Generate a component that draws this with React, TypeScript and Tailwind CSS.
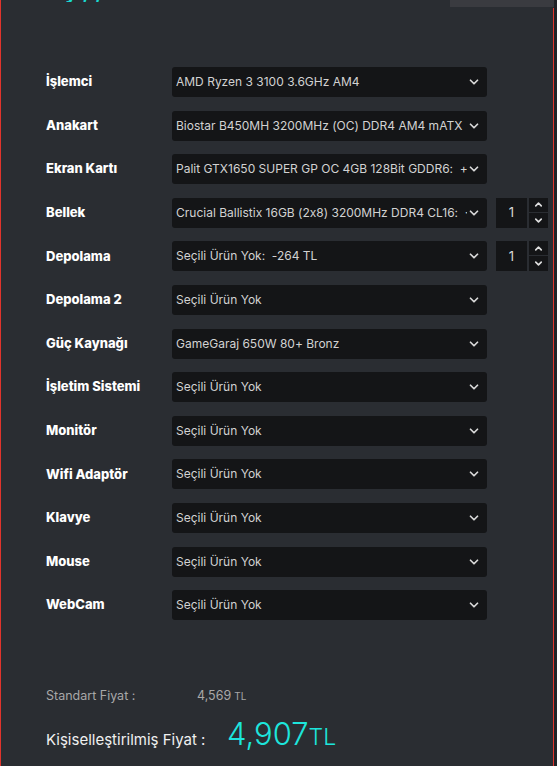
import { ChevronDown, ChevronUp } from "lucide-react";

interface Part {
  label: string;
  value: string;
  qty?: boolean;
}

const parts: Part[] = [
  { label: "İşlemci", value: "AMD Ryzen 3 3100 3.6GHz AM4" },
  { label: "Anakart", value: "Biostar B450MH 3200MHz (OC) DDR4 AM4 mATX" },
  { label: "Ekran Kartı", value: "Palit GTX1650 SUPER GP OC 4GB 128Bit GDDR6:  +" },
  { label: "Bellek", value: "Crucial Ballistix 16GB (2x8) 3200MHz DDR4 CL16:  ·", qty: true },
  { label: "Depolama", value: "Seçili Ürün Yok:  -264 TL", qty: true },
  { label: "Depolama 2", value: "Seçili Ürün Yok" },
  { label: "Güç Kaynağı", value: "GameGaraj 650W 80+ Bronz" },
  { label: "İşletim Sistemi", value: "Seçili Ürün Yok" },
  { label: "Monitör", value: "Seçili Ürün Yok" },
  { label: "Wifi Adaptör", value: "Seçili Ürün Yok" },
  { label: "Klavye", value: "Seçili Ürün Yok" },
  { label: "Mouse", value: "Seçili Ürün Yok" },
  { label: "WebCam", value: "Seçili Ürün Yok" },
];

function PartRow({ label, value, qty }: Part) {
  return (
    <div className="flex items-center h-[30px]">
      <div className="w-[126px] text-[13px] font-extrabold text-white">{label}</div>
      <div className="w-[315px] h-[30px] bg-[#141517] rounded-[3px] flex items-center pl-[4px] pr-[6px]">
        <span className="flex-1 whitespace-pre overflow-hidden text-[12px] text-[#d2d2d2] [font-feature-settings:'calt'_0]">{value}</span>
        <ChevronDown className="w-[14px] h-[14px] text-[#d8d8d8] shrink-0" strokeWidth={3} />
      </div>
      {qty && (
        <div className="flex items-center ml-[9px] gap-[2px]">
          <div className="w-[31px] h-[30px] bg-[#141517] flex items-center justify-center text-[13px] text-[#d8d8d8]">1</div>
          <div className="flex flex-col gap-[1px]">
            <div className="w-[19px] h-[14px] bg-[#141517] flex items-center justify-center">
              <ChevronUp className="w-[11px] h-[11px] text-[#e0e0e0]" strokeWidth={3.5} />
            </div>
            <div className="w-[19px] h-[15px] bg-[#141517] flex items-center justify-center">
              <ChevronDown className="w-[11px] h-[11px] text-[#e0e0e0]" strokeWidth={3.5} />
            </div>
          </div>
        </div>
      )}
    </div>
  );
}

export default function App() {
  return (
    <div className="w-[557px] h-[766px] bg-[#202227] overflow-hidden font-['Inter','Noto_Sans',sans-serif]">
      <div className="w-[554px] h-full bg-[#2a2d32] border-l border-[#e0342c] flex flex-col">
        {/* top strip: cut-off heading and banner edge */}
        <div className="h-[8px] flex shrink-0">
          <div className="flex-1 h-[2px] overflow-hidden relative">
            <div className="absolute left-[64px] bottom-0 text-[20px] leading-none text-[#19d9d0] font-bold tracking-[6px]">y,,</div>
          </div>
          <div className="w-[104px] h-[7px] bg-[#3a3b40]" />
        </div>
        <div className="flex-1 border-r border-[#e0342c] flex flex-col">
          <div className="pl-[45px] pt-[59px] flex flex-col gap-[13.6px]">
            {parts.map((p) => (
              <PartRow key={p.label} {...p} />
            ))}
          </div>
          <div className="pl-[45px] mt-[67px]">
            <div className="flex items-baseline text-[12.5px] text-[#a8a8a8]">
              <span className="w-[151px]">Standart Fiyat :</span>
              <span>4,569</span>
              <span className="text-[10px] ml-[3px]">TL</span>
            </div>
            <div className="flex items-baseline mt-[12px]">
              <span className="w-[181px] text-[15px] text-[#f0f0f0]">Kişiselleştirilmiş Fiyat :</span>
              <span className="text-[31px] font-light text-[#1de5dc] leading-none">4,907</span>
              <span className="text-[23px] font-light text-[#1de5dc] leading-none">TL</span>
            </div>
          </div>
        </div>
      </div>
    </div>
  );
}
